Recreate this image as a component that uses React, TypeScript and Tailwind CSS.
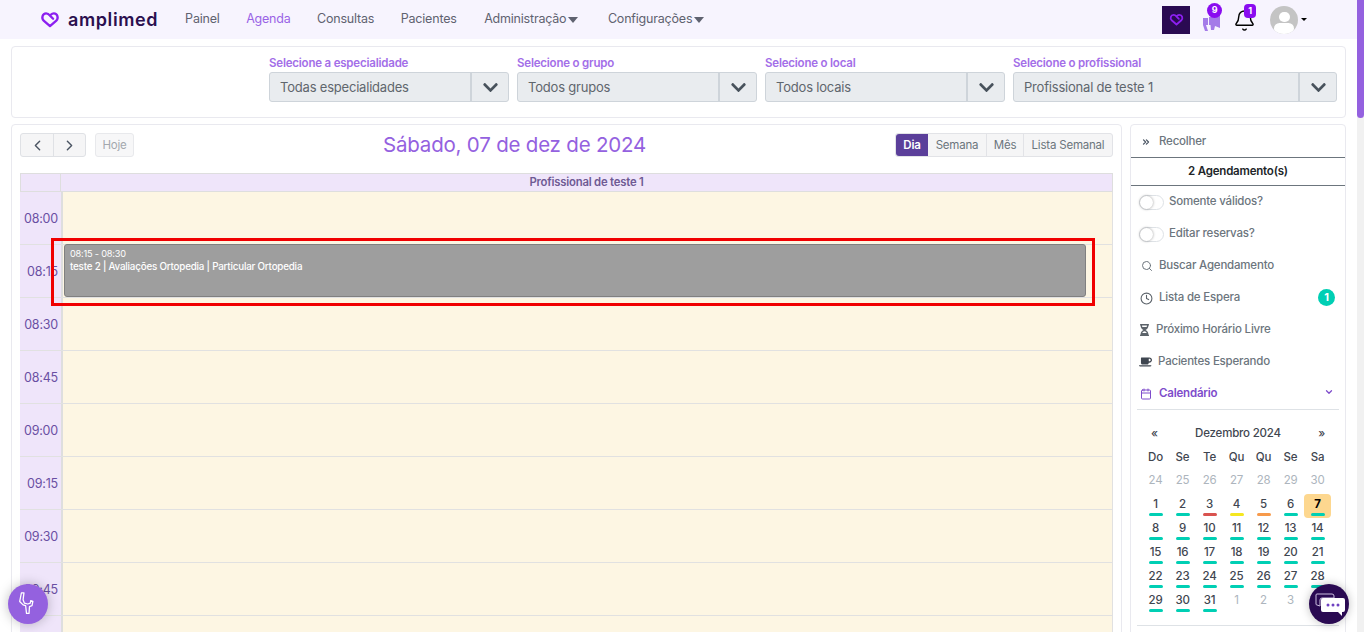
import { Bell, Calendar, ChevronDown, ChevronLeft, ChevronRight, ChevronsRight, Clock, Search } from "lucide-react";
import { FaChevronDown, FaCoffee, FaHourglassHalf } from "react-icons/fa";

const NAV = ["Painel", "Agenda", "Consultas", "Pacientes"];
const FILTERS = [
  { label: "Selecione a especialidade", value: "Todas especialidades", width: "w-[240px]" },
  { label: "Selecione o grupo", value: "Todos grupos", width: "w-[240px]" },
  { label: "Selecione o local", value: "Todos locais", width: "w-[240px]" },
  { label: "Selecione o profissional", value: "Profissional de teste 1", width: "w-[324px]" },
];
const TIMES = ["08:00", "08:15", "08:30", "08:45", "09:00", "09:15", "09:30", "09:45", ""];
const WEEK = ["Do", "Se", "Te", "Qu", "Qu", "Se", "Sa"];
const PREV = [24, 25, 26, 27, 28, 29, 30];
const NEXT = [1, 2, 3, 4];
const MARKS: Record<number, string> = { 3: "bg-[#d9534f]", 4: "bg-[#f5e71f]", 5: "bg-[#f79a4b]" };

function Heart({ className }: { className: string }) {
  return (
    <svg viewBox="0 0 24 22" fill="none" stroke="currentColor" strokeWidth="3" className={className}>
      <path d="M12 19.5 3.8 12.3C.6 9.4 2.2 3 7 3c2.400 0 3.800 1.400 5 3l4 4M12 19.500l8.200-7.200C23.400 9.400 21.800 3 17 3c-1.800 0-3 .8-4 1.800" strokeLinecap="round" strokeLinejoin="round" />
    </svg>
  );
}

function Toggle({ label }: { label: string }) {
  return (
    <div className="h-8 flex items-center pl-[8px] text-[#6c757d] font-medium">
      <span className="w-[25px] h-[15px] rounded-full border border-[#dee2e6] bg-white flex items-center">
        <span className="w-[13px] h-[13px] rounded-full bg-white shadow-[0_0_3px_rgba(0,0,0,0.4)]" />
      </span>
      <span className="ml-[5px]">{label}</span>
    </div>
  );
}

function SideRow({ icon, label, pad = "pl-[10px]", gap = "ml-[6px]" }: { icon: React.ReactNode; label: string; pad?: string; gap?: string }) {
  return (
    <div className={`h-8 flex items-center text-[#6c757d] font-medium ${pad}`}>
      {icon}
      <span className={gap}>{label}</span>
    </div>
  );
}

function Day({ n, muted, today }: { n: number; muted?: boolean; today?: boolean }) {
  return (
    <div className={`w-[27px] h-6 flex flex-col items-center justify-center rounded ${today ? "bg-[#fdd78f] text-black font-bold" : muted ? "text-[#adb5bd]" : "text-[#3f4650] font-medium"}`}>
      <span className="leading-[15px] h-[15px]">{n}</span>
      <span className={`w-[14px] h-[3px] rounded-sm mt-[1px] ${muted ? "" : MARKS[n] ?? "bg-[#00cfb4]"}`} />
    </div>
  );
}

export default function App() {
  return (
    <div className="h-[632px] overflow-hidden flex bg-white font-['Inter',sans-serif] tracking-[-0.2px] relative">
      <div className="flex-1 min-w-0">
        {/* Top nav */}
        <header className="h-[39px] bg-[#f7f4fe] flex items-center pl-[40px] pr-[50px]">
          <Heart className="w-[20px] h-[17px] text-[#8c1ff0]" />
          <span className="ml-[8px] text-[18px] font-semibold text-[#2b0f4f] tracking-[0.6px] leading-none">amplimed</span>
          <nav className="ml-[27px] flex items-center gap-[26.500px] text-[12.500px] text-[#5f6270]">
            {NAV.map(n => (
              <span key={n} className={n === "Agenda" ? "text-[#9a63e6]" : ""}>{n}</span>
            ))}
            <span className="flex items-center gap-[2px] ml-[1px]">Administração<span className="w-0 h-0 border-x-[5px] border-x-transparent border-t-[6px] border-t-[#5f6270]" /></span>
            <span className="flex items-center gap-[2px] ml-[3px]">Configurações<span className="w-0 h-0 border-x-[5px] border-x-transparent border-t-[6px] border-t-[#5f6270]" /></span>
          </nav>
          <div className="ml-auto flex items-center">
            <div className="w-7 h-7 bg-[#2a0a52] flex items-center justify-center">
              <Heart className="w-[15px] h-[13px] text-[#8c1ff0]" />
            </div>
            <div className="relative ml-[12px] w-5 h-5">
              <svg viewBox="0 0 20 18" className="w-5 h-[18px] mt-[3px] text-[#a47be8]" fill="currentColor">
                <path d="M1 5h5v7H4l2 6H3l-2-6zM7 4l11-2v13l-5-2-1 4H9l-.5-5L7 12z" />
              </svg>
              <span className="absolute -top-[7px] left-[5px] w-[15px] h-[15px] rounded-full bg-[#8a0cf0] text-white text-[9px] font-bold flex items-center justify-center">9</span>
            </div>
            <div className="relative ml-[11px] w-[22px] h-[22px]">
              <Bell className="w-[23px] h-[23px] text-black" strokeWidth={1.5} />
              <span className="absolute -top-[5px] left-[11px] w-3 h-[14px] rounded-sm bg-[#8a0cf0] text-white text-[9px] font-bold flex items-center justify-center">1</span>
            </div>
            <div className="ml-[15px] w-7 h-7 rounded-full bg-[#c4c4c4] overflow-hidden flex flex-col items-center">
              <span className="w-[11px] h-[11px] rounded-full bg-white mt-[6px]" />
              <span className="w-[20px] h-[12px] rounded-full bg-white mt-[1px]" />
            </div>
            <span className="ml-[3px] w-0 h-0 border-x-[3px] border-x-transparent border-t-[3px] border-t-black" />
          </div>
        </header>

        <div className="pl-[11px] pr-[11px] pt-[7px]">
          {/* Filters */}
          <section className="h-[72px] border border-[#e9e9ef] rounded bg-white flex justify-end gap-2 pr-2 pt-[8px] text-[#6b7280]">
            {FILTERS.map(f => (
              <div key={f.label} className={f.width}>
                <div className="h-[17px] text-[11.500px] leading-[17px] font-semibold text-[#a36ee8] whitespace-nowrap">{f.label}</div>
                <div className="h-[30px] flex bg-[#e9ecef] border border-[#ced4da] rounded-[3px]">
                  <span className="flex-1 pl-[10px] text-[13px] leading-[28px] text-[#5f666d]">{f.value}</span>
                  <span className="w-[38px] border-l-2 border-[#ced4da] flex items-center justify-center text-[#48525c]">
                    <FaChevronDown className="w-[17px] h-[17px]" />
                  </span>
                </div>
              </div>
            ))}
          </section>

          <div className="flex gap-2 mt-[6px]">
            {/* Agenda */}
            <main className="w-[1111px] h-[520px] border border-[#e9e9ef] rounded-t bg-white px-2 pt-2 relative">
              <div className="h-6 relative flex items-center justify-between">
                <div className="flex items-center">
                  <div className="flex h-6 rounded-[3px] border border-[#dfe1e5] bg-[#f5f5f6] text-[#4b5563]">
                    <span className="w-[33px] border-r border-[#dfe1e5] flex items-center justify-center"><ChevronLeft className="w-[17px] h-[17px]" /></span>
                    <span className="w-[31px] flex items-center justify-center"><ChevronRight className="w-[17px] h-[17px]" /></span>
                  </div>
                  <span className="ml-[9px] w-[39px] h-6 rounded-[3px] border border-[#e8e9ec] bg-[#f7f7f8] pt-px text-[11.500px] text-[#a3a8ae] flex items-center justify-center">Hoje</span>
                </div>
                <h1 className="absolute left-[363px] top-0 text-[20.500px] leading-6 text-[#9461df] font-normal whitespace-nowrap">Sábado, 07 de dez de 2024</h1>
                <div className="flex h-6 rounded-[3px] border border-[#e2e3e7] bg-[#f5f5f6] text-[11.500px] text-[#6c757d]">
                  <span className="w-[32px] bg-[#5b3f9a] text-white font-semibold rounded-l-[3px] pt-px flex items-center justify-center">Dia</span>
                  <span className="w-[59px] border-r border-[#e2e3e7] pt-px flex items-center justify-center">Semana</span>
                  <span className="w-[37px] border-r border-[#e2e3e7] pt-px flex items-center justify-center">Mês</span>
                  <span className="w-[88px] pt-px flex items-center justify-center">Lista Semanal</span>
                </div>
              </div>

              {/* Day grid */}
              <div className="mt-4 relative">
                <div className="h-[19px] flex bg-[#efe5fa] border border-[#dedede] text-[11.300px] font-semibold text-[#6e5a94]">
                  <span className="w-[40px] border-r border-[#dedede]" />
                  <span className="flex-1 text-center leading-[17px]">Profissional de teste 1</span>
                </div>
                {TIMES.map((t, i) => (
                  <div key={i} className="h-[53px] flex border-b border-[#e1e1e1] border-r">
                    <span className="w-[43px] bg-[#efe5fa] border-r-2 border-[#dedede] text-right pr-[3px] text-[12.500px] leading-[54px] text-[#6a4fa3]">{t}</span>
                    <span className="flex-1 bg-[#fdf6e3]" />
                  </div>
                ))}
                {/* Selected appointment */}
                <div className="absolute left-[44px] right-[27px] top-[71px] h-[53px] rounded-[3px] bg-[#9e9e9e] border border-[#808080] pl-[5px] pt-[3px] text-[9.800px] leading-3 text-white">
                  <div className="text-[9.200px]">08:15 - 08:30</div>
                  <div className="font-medium mt-px">teste 2 | Avaliações Ortopedia | Particular Ortopedia</div>
                </div>
                <div className="absolute left-[31px] right-[18px] top-[65px] h-[68px] border-[3px] border-[#f00000]" />
              </div>
            </main>

            {/* Sidebar */}
            <aside className="w-[216px] h-[520px] border border-[#e9e9ef] rounded-t bg-white text-[11.500px]">
              <div className="h-[33px] flex items-center pl-[10px] pt-[2px] text-[#6c757d] font-medium border-b border-[#6c757d]">
                <ChevronsRight className="w-[10px] h-[10px] text-[#4b5563]" strokeWidth={3} />
                <span className="ml-[8px]">Recolher</span>
              </div>
              <div className="h-[28px] flex items-center justify-center border-b border-[#6c757d] font-semibold text-[#212529]">2 Agendamento(s)</div>
              <Toggle label="Somente válidos?" />
              <Toggle label="Editar reservas?" />
              <SideRow icon={<Search className="w-[12px] h-[12px] text-[#6c757d]" />} label="Buscar Agendamento" />
              <div className="relative">
                <SideRow pad="pl-[9px]" gap="ml-[6px]" icon={<Clock className="w-[13px] h-[13px] text-[#5c636a]" />} label="Lista de Espera" />
                <span className="absolute right-[10px] top-[7px] w-[17px] h-[17px] rounded-full bg-[#00cfb4] text-white text-[11px] font-bold flex items-center justify-center">1</span>
              </div>
              <SideRow pad="pl-[8px]" gap="ml-[6px]" icon={<FaHourglassHalf className="w-[11px] h-[12px] text-[#5c636a]" />} label="Próximo Horário Livre" />
              <SideRow pad="pl-[8px]" gap="ml-[6px]" icon={<FaCoffee className="w-[13px] h-[12px] text-[#3f4650]" />} label="Pacientes Esperando" />
              <div className="h-[31px] flex items-center pl-[9px] pr-[11px] text-[#7e4ccb] font-semibold">
                <Calendar className="w-[12px] h-[12px]" />
                <span className="ml-[7px]">Calendário</span>
                <ChevronDown className="ml-auto w-[10px] h-[10px] -mt-1" strokeWidth={3} />
              </div>
              <div className="mx-[6px] border-t border-[#dee2e6] h-[13px]" />
              <div className="px-[11px] text-[#3f4650]">
                <div className="h-[23px] flex items-center justify-between px-[9px] font-medium">
                  <span>«</span>
                  <span>Dezembro 2024</span>
                  <span>»</span>
                </div>
                <div className="grid grid-cols-[repeat(7,27px)] text-center">
                  {WEEK.map((d, i) => <span key={i} className="h-[25px] leading-6 font-medium">{d}</span>)}
                  {PREV.map(n => <Day key={`p${n}`} n={n} muted />)}
                  {Array.from({ length: 31 }, (_, i) => i + 1).map(n => <Day key={n} n={n} today={n === 7} />)}
                  {NEXT.map(n => <Day key={`n${n}`} n={n} muted />)}
                </div>
              </div>
              <div className="mx-[6px] mt-[11px] border-t border-[#dee2e6]" />
            </aside>
          </div>
        </div>
      </div>

      {/* Scrollbar */}
      <div className="w-[7px] bg-[#f1f1f1]">
        <div className="h-[118px] bg-[#9461df] rounded-b-sm" />
      </div>

      {/* Floating buttons */}
      <button className="absolute left-[8px] top-[584px] w-10 h-10 rounded-full bg-[#9461df] shadow-[0_0_12px_rgba(0,0,0,0.25)] flex items-center justify-center">
        <svg viewBox="0 0 20 28" className="w-[17px] h-6 -ml-1" fill="none" stroke="white" strokeWidth="1.500" strokeLinejoin="round">
          <path d="M4 1 2 11l4 4 3 1 1 9h3l.5-8 3-1 1-5-2.500-1-.5 3-3 1-4-1-1.500-4 1-8z" />
        </svg>
      </button>
      <button className="absolute left-[1309px] top-[584px] w-10 h-10 rounded-full bg-[#2a0a52] shadow-[0_0_10px_rgba(0,0,0,0.25)] overflow-hidden">
        <svg viewBox="0 0 40 40" className="w-10 h-10" fill="none">
          <path d="M8 10h15a2 2 0 0 1 2 2v2H13a2 2 0 0 0-2 2v6l-3-1a1 1 0 0 1-1-1V11a1 1 0 0 1 1-1z" stroke="#cbbfe0" strokeWidth="1" />
          <path d="M14 14h20a2 2 0 0 1 2 2v10a2 2 0 0 1-2 2h-1v4l-4-4H14a2 2 0 0 1-2-2V16a2 2 0 0 1 2-2z" fill="white" />
          <circle cx="19" cy="21" r="1.500" fill="#6f42c1" /><circle cx="24" cy="21" r="1.500" fill="#6f42c1" /><circle cx="29" cy="21" r="1.500" fill="#6f42c1" />
        </svg>
      </button>
    </div>
  );
}
